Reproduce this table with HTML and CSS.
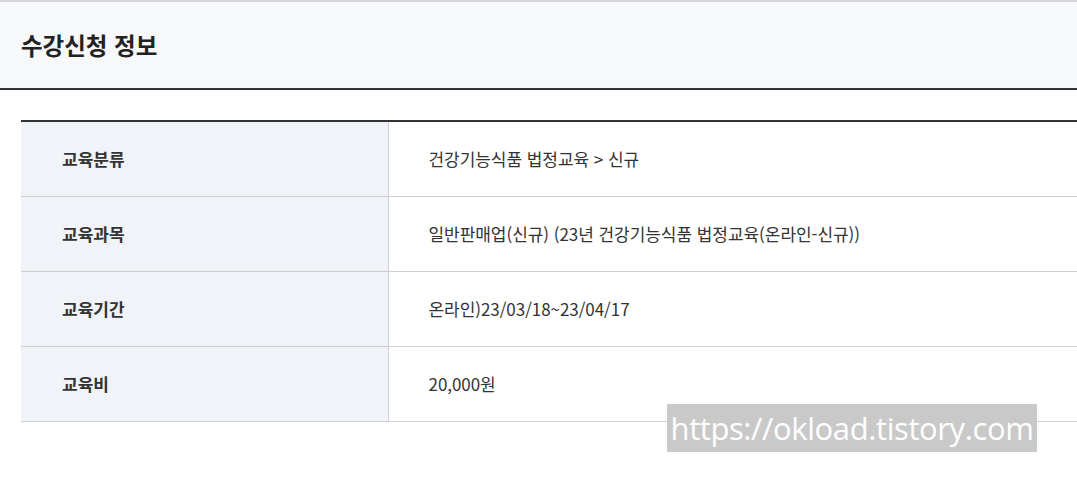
FILE: index.html
```html
<!DOCTYPE html>
<html lang="ko">
<head>
<meta charset="utf-8">
<link rel="stylesheet" href="styles.css">
</head>
<body>
<div class="page">
  <div class="section-head">
    <h2 class="section-title">수강신청 정보</h2>
  </div>
  <table class="info-table">
    <tr>
      <th>교육분류</th>
      <td>건강기능식품 법정교육 &gt; 신규</td>
    </tr>
    <tr>
      <th>교육과목</th>
      <td>일반판매업(신규) (23년 건강기능식품 법정교육(온라인-신규))</td>
    </tr>
    <tr>
      <th>교육기간</th>
      <td>온라인)23/03/18~23/04/17</td>
    </tr>
    <tr>
      <th>교육비</th>
      <td>20,000원</td>
    </tr>
  </table>
  <div class="watermark">https://okload.tistory.com</div>
</div>
</body>
</html>
```
FILE: styles.css
```css
* { box-sizing: border-box; }
html, body { margin: 0; padding: 0; background: #fff; }
body {
  font-family: "Noto Sans CJK KR", "Noto Sans", sans-serif;
  color: #333;
  width: 1077px;
  height: 492px;
  overflow: hidden;
}
.page { position: relative; width: 1077px; height: 492px; }
.section-head {
  height: 90px;
  background: #f7f8fa;
  border-top: 2px solid #d6d6d9;
  border-bottom: 2px solid #333;
  display: flex;
  align-items: center;
  padding-left: 21px;
}
.section-title {
  margin: 0;
  font-size: 23.5px;
  font-weight: 700;
  color: #222;
  letter-spacing: 0;
  line-height: 1;
  padding-top: 1px;
}
.info-table {
  margin: 30px 0 0 21px;
  width: 1080px;
  border-collapse: collapse;
  border-top: 2px solid #333;
}
.info-table th,
.info-table td {
  height: 75px;
  border-bottom: 1px solid #cfcfcf;
  font-size: 17px;
  text-align: left;
  vertical-align: middle;
  line-height: 1;
  padding-top: 0;
  padding-bottom: 0;
}
.info-table th {
  width: 367px;
  background: #f0f3f7;
  border-right: 1px solid #cfcfcf;
  font-weight: 700;
  color: #333;
  padding-left: 41px;
}
.info-table td {
  font-weight: 400;
  color: #333;
  padding-left: 40px;
  letter-spacing: -0.05px;
}
.watermark {
  position: absolute;
  left: 667px;
  top: 404px;
  width: 370px;
  height: 48px;
  background: #c9c9c9;
  color: #fff;
  font-family: "Open Sans", sans-serif;
  font-size: 31px;
  letter-spacing: -0.4px;
  line-height: 48px;
  text-align: center;
  white-space: nowrap;
}
```
